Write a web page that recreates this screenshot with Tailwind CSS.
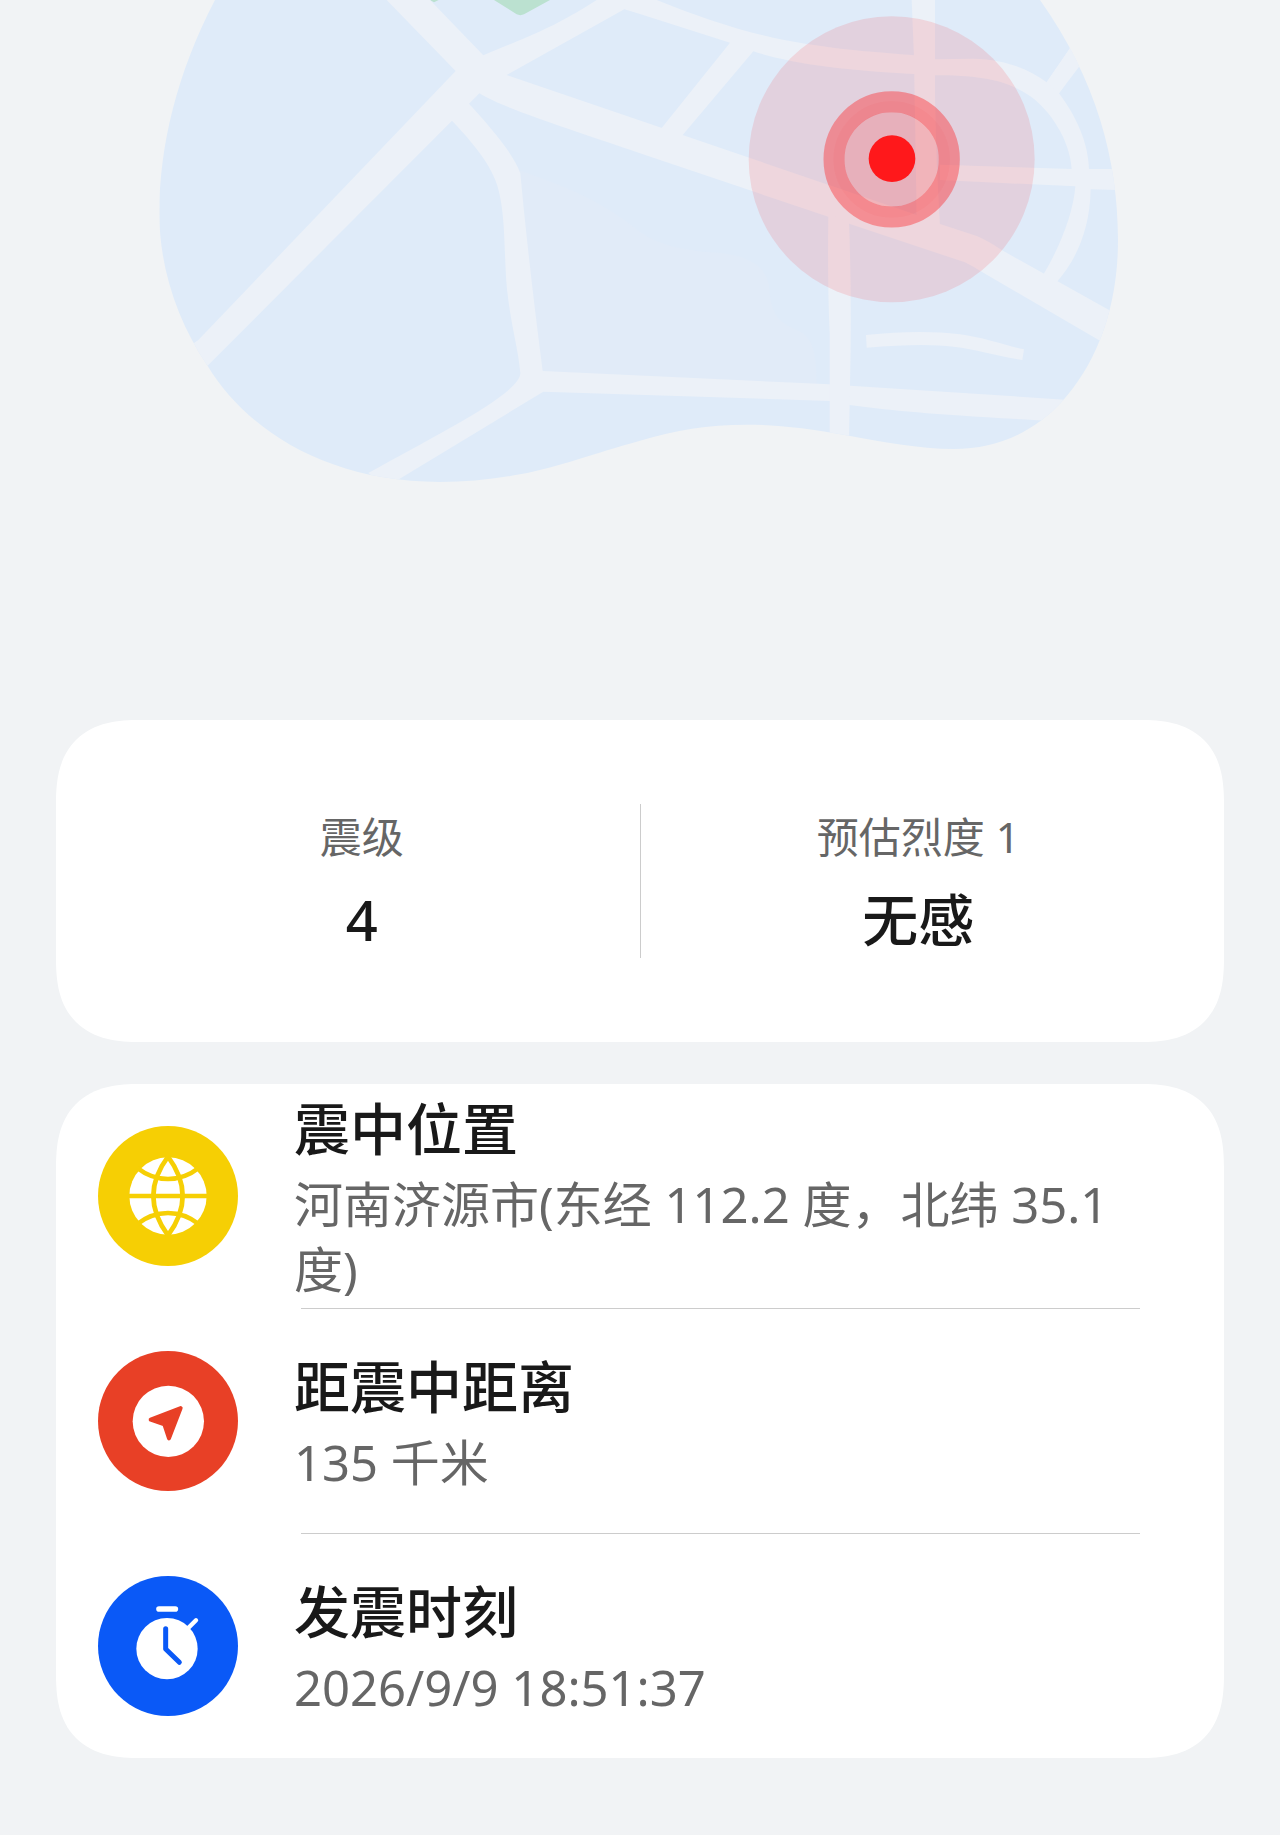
<!DOCTYPE html>
<html lang="zh-CN">
<head>
  <meta charset="UTF-8">
  <meta name="viewport" content="width=device-width, initial-scale=1.0">
  <title>地震预警详情</title>
  <script src="https://cdn.jsdelivr.net/npm/@tailwindcss/browser@4"></script>
</head>
<body class="bg-[#f1f3f5] min-h-screen text-[#191919] font-['Noto_Sans','Noto_Sans_CJK_SC',sans-serif]">

  <!-- 地图 -->
  <svg class="block w-full mb-[220px]" viewBox="0 0 3840 1500" role="img" aria-label="震中地图">
    <defs>
      <clipPath id="land">
        <path d="M645 0C530 220 478 440 478 640C478 800 530 960 623 1098C740 1290 980 1446 1320 1446C1400 1446 1480 1438 1560 1423C1680 1400 1780 1360 1920 1322C2030 1290 2120 1274 2240 1274C2330 1274 2420 1284 2547 1307C2640 1324 2760 1347 2860 1347C3000 1347 3110 1290 3190 1200C3280 1100 3354 940 3354 720C3354 480 3290 240 3120 0Z"/>
      </clipPath>
    </defs>
    <g clip-path="url(#land)">
      <rect width="3840" height="1500" fill="#dfebf9"/>
      <path fill="#e1ebf8" d="M1555 510C1700 560 1800 600 1920 695C1980 740 2080 755 2160 758C2250 770 2305 800 2308 870C2315 960 2350 970 2390 990C2440 1010 2450 1060 2450 1160L1620 1130Z"/>
      <path fill="#bbe1d0" d="M1482 0L1550 43Q1561 48 1572 43L1650 0ZM1290 0L1302 7L1316 0Z"/>
      <g fill="#ecf1f8">
        <!-- 主干道 -->
        <path d="M1160 0L1367 213L595 1020L560 1045L600 1120L1356 362C1430 440 1485 510 1498 580C1520 680 1510 800 1525 900C1535 980 1555 1050 1561 1120C1560 1180 1320 1300 1105 1419L1160 1460L1630 1175L2489 1203L2547 1215C2700 1235 2820 1245 3180 1264L3240 1202L2550 1157L2489 1153L1628 1113Q1585 780 1561 520C1540 460 1470 380 1407 311L1438 280C1520 330 1720 390 1920 460L2550 672L2895 787Q2920 800 2945 815L3296 1020L3380 1040V950L3327 930L3005 750Q2960 720 2930 708L2820 672L2750 645L1520 225L1873 28L1920 42L2190 128L1985 384L2048 405L2260 154C2370 190 2520 210 2740 222L2805 226C2940 226 3020 240 3090 288C3150 330 3210 420 3215 507L2820 494V540L3226 559C3220 640 3180 740 3131 822L3171 845C3220 790 3270 700 3272 568L3400 571V507L3267 507C3265 430 3230 350 3177 280L3260 160L3213 140L3140 247C3090 210 3020 178 2920 176L2805 178L2742 166C2660 158 2570 155 2420 132C2270 110 2120 60 1970 0L1790 0C1650 90 1570 115 1450 166L1290 0Z"/>
        <path d="M3213 140L3140 247L3177 280L3260 170Z"/>
        <path d="M2735 0H2805V290Q2808 480 2820 680L2750 650L2742 170Z"/>
        <path d="M2485 640L2547 665Q2556 900 2550 1157L2547 1320H2489V1000Q2482 850 2485 640Z"/>
        <path d="M2598 1005C2700 995 2790 992 2880 1003C2950 1012 3010 1035 3072 1048L3067 1080C2990 1068 2930 1048 2860 1040Q2770 1028 2600 1043Z"/>
      </g>
    </g>
    <!-- 震中标记 -->
    <g fill="none" stroke="#ff1a1e">
      <circle cx="2675" cy="478" r="429" fill="#ff1a1e" fill-opacity=".12" stroke="none"/>
      <circle cx="2675" cy="478" r="142" fill="#ff1a1e" fill-opacity=".18" stroke="none"/>
      <circle cx="2675" cy="478" r="173" stroke-width="63" stroke-opacity=".38"/>
      <circle cx="2675" cy="478" r="158" stroke-width="33" stroke-opacity=".04"/>
      <circle cx="2676" cy="476" r="70" fill="#ff181b" stroke="none"/>
    </g>
  </svg>

  <main class="px-14 pb-[77px] flex flex-col gap-[42px]">

    <section class="bg-white rounded-[84px] [corner-shape:superellipse(1.35)] px-7 py-[84px] flex items-center text-center">
      <div class="flex-1 flex flex-col gap-3">
        <p class="text-[42px] leading-[64px] text-[#666]">震级</p>
        <p class="text-[56px] leading-[76px] font-medium">4</p>
      </div>
      <div class="w-px h-[154px] bg-[#ccc]"></div>
      <div class="flex-1 flex flex-col gap-3">
        <p class="text-[42px] leading-[64px] text-[#666]">预估烈度 1</p>
        <p class="text-[56px] leading-[76px] font-medium">无感</p>
      </div>
    </section>

    <section class="bg-white rounded-[84px] [corner-shape:superellipse(1.35)]">
      <div class="min-h-[224px] pl-[42px] pr-[84px] flex items-center gap-14">
        <svg class="size-[140px] shrink-0" viewBox="0 0 420 420" fill="none" stroke="#f6cf04" stroke-width="14">
          <circle cx="210" cy="210" r="210" fill="#f6cf04" stroke="none"/>
          <circle cx="210" cy="210" r="116" fill="#fff" stroke="none"/>
          <path d="M90 210H330M210 92Q122 210 210 328M210 92Q298 210 210 328M118 126Q160 159 210 159T302 126M118 294Q160 261 210 261T302 294"/>
        </svg>
        <div class="flex-1 flex flex-col gap-1.5">
          <h2 class="text-[56px] leading-[76px] font-medium">震中位置</h2>
          <p class="text-[49px] leading-[65px] text-[#666]">河南济源市(东经 112.2 度，北纬 35.1 度)</p>
        </div>
      </div>
      <hr class="ml-[245px] mr-[84px] h-px border-0 bg-[#ccc]">
      <div class="min-h-[224px] pl-[42px] pr-[84px] flex items-center gap-14">
        <svg class="size-[140px] shrink-0" viewBox="0 0 420 420">
          <circle cx="210" cy="210" r="210" fill="#e84026"/>
          <circle cx="211" cy="211" r="107" fill="#fff"/>
          <path d="M248 171L158 206L199 220L213 262Z" fill="#e84026" stroke="#e84026" stroke-width="12" stroke-linejoin="round"/>
        </svg>
        <div class="flex-1 flex flex-col gap-1.5">
          <h2 class="text-[56px] leading-[76px] font-medium">距震中距离</h2>
          <p class="text-[49px] leading-[65px] text-[#666]">135 千米</p>
        </div>
      </div>
      <hr class="ml-[245px] mr-[84px] h-px border-0 bg-[#ccc]">
      <div class="min-h-[224px] pl-[42px] pr-[84px] flex items-center gap-14">
        <svg class="size-[140px] shrink-0" viewBox="0 0 420 420" fill="none" stroke-linecap="round" stroke-linejoin="round">
          <circle cx="210" cy="210" r="210" fill="#0a59f7"/>
          <circle cx="207" cy="218" r="92" fill="#fff"/>
          <path d="M183 99H232" stroke="#fff" stroke-width="17"/>
          <path d="M270 157L294 133" stroke="#fff" stroke-width="13"/>
          <path d="M203 158V219L244 259" stroke="#0a59f7" stroke-width="15"/>
        </svg>
        <div class="flex-1 flex flex-col gap-1.5">
          <h2 class="text-[56px] leading-[76px] font-medium">发震时刻</h2>
          <p class="text-[49px] leading-[65px] text-[#666]">2026/9/9 18:51:37</p>
        </div>
      </div>
    </section>

  </main>
</body>
</html>
